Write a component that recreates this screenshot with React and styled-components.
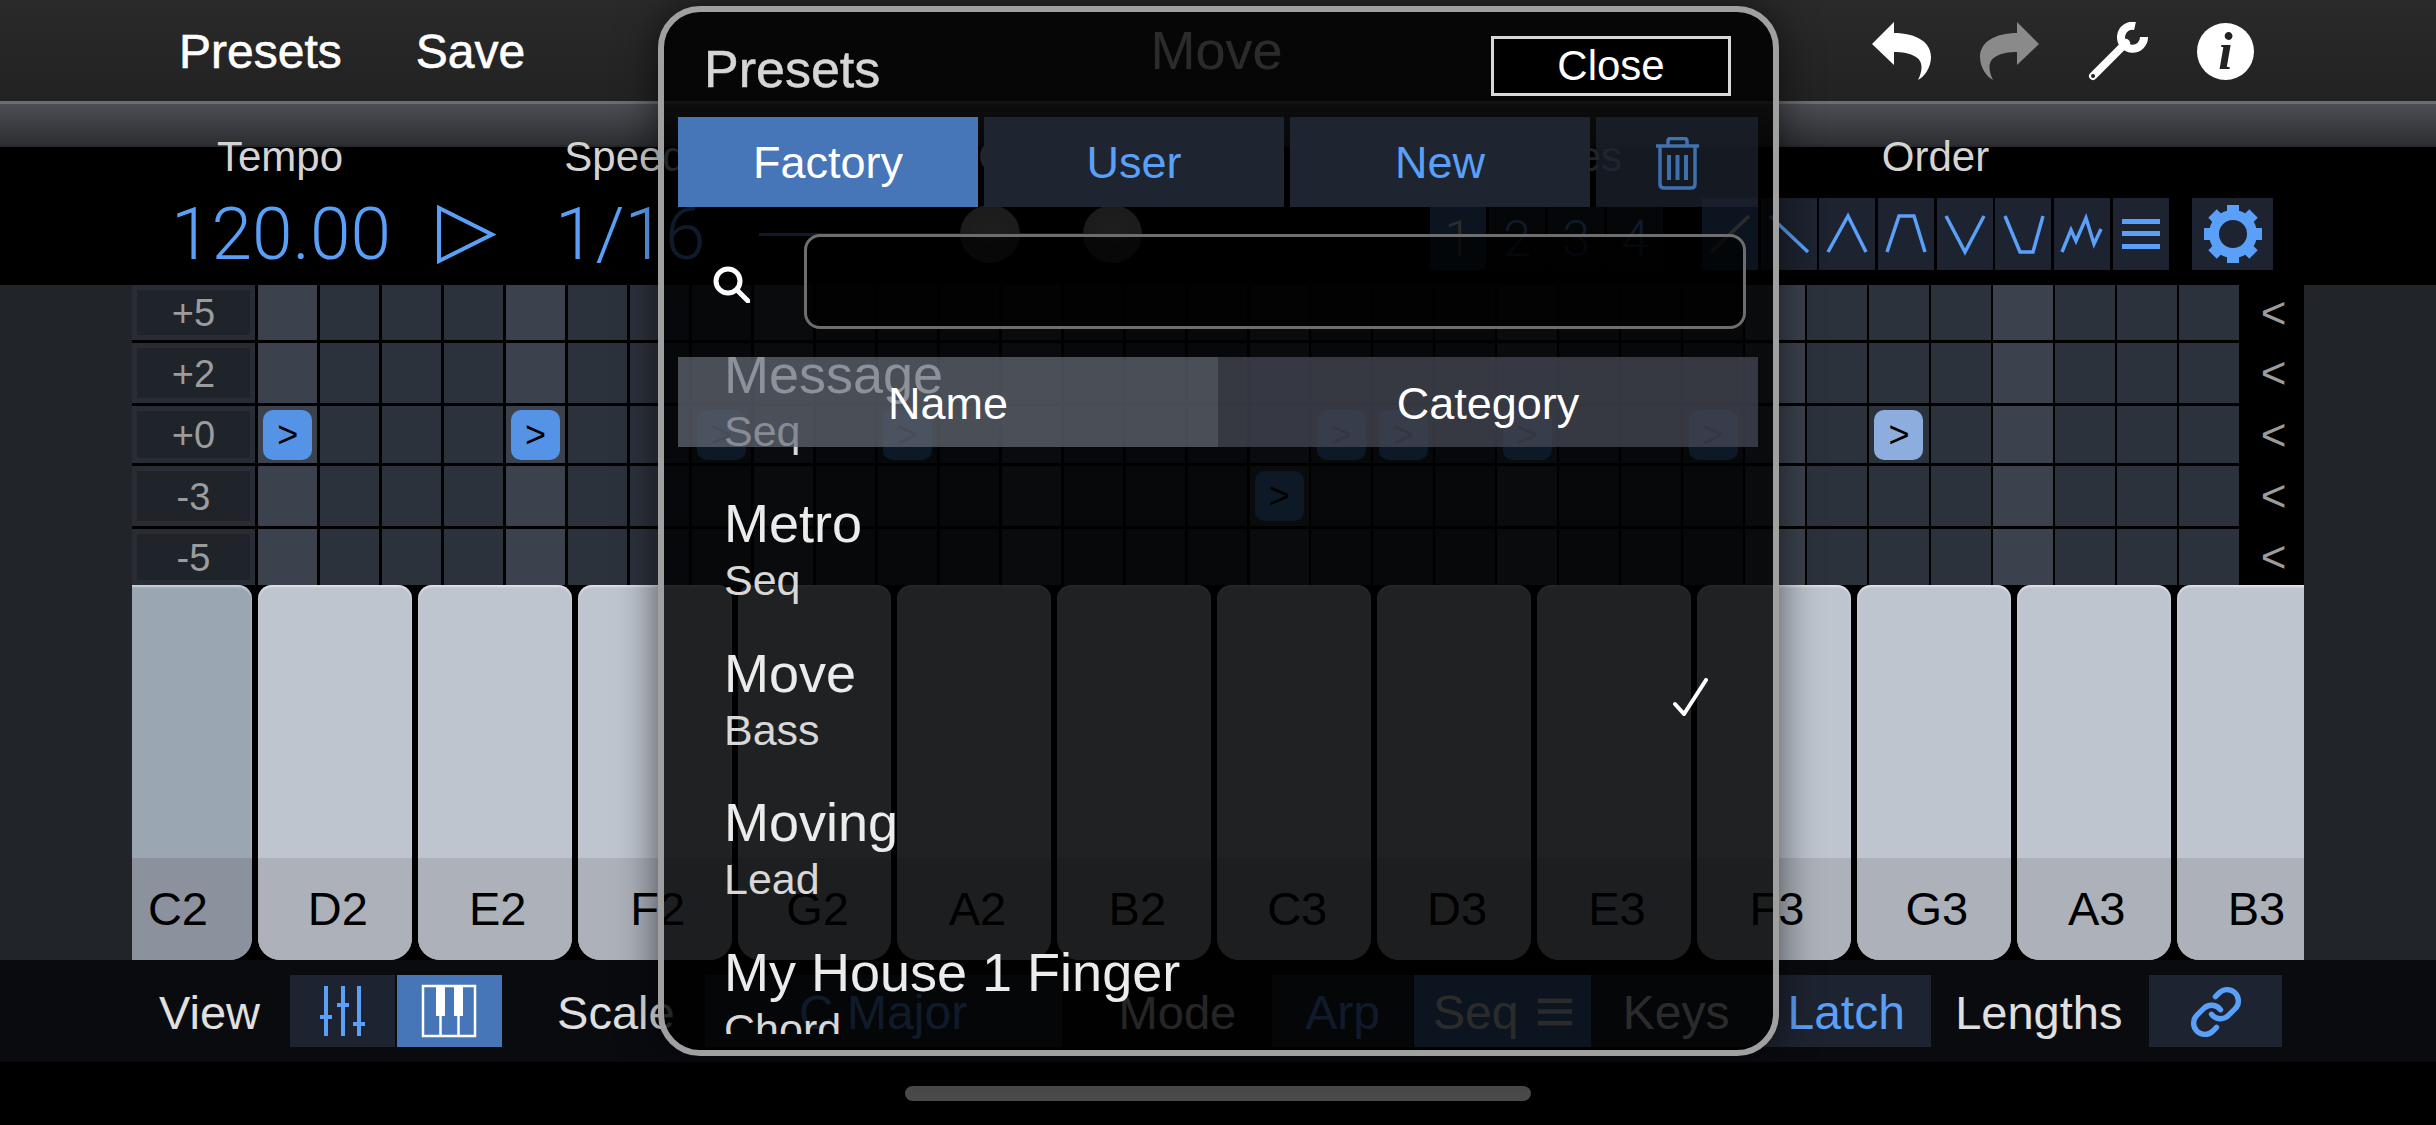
import styled, { createGlobalStyle } from "styled-components";
import { Link } from "lucide-react";

const BLUE = "#5aa0f8";
const ACTIVE = "#4675b8";
const BUTTON = "#1d2330";

const GlobalStyle = createGlobalStyle`
  html, body {
    margin: 0;
    background: #000;
    font-family: "Liberation Sans", Arial, sans-serif;
  }
`;

const Page = styled.div`
  position: relative;
  width: 2436px;
  height: 1125px;
  overflow: hidden;
  background: #000;
  display: flex;
  flex-direction: column;
`;

const TopBar = styled.header`
  height: 101px;
  display: grid;
  grid-template-columns: 1fr auto 1fr;
  align-items: center;
  padding: 2px 182px 0 179px;
  box-sizing: border-box;
  background: linear-gradient(#2a2a2a, #222);
`;

const TopLeft = styled.div`
  display: flex;
  gap: 74px;
`;

const TopAction = styled.span`
  font-size: 48px;
  color: #fff;
  -webkit-text-stroke: 0.6px #fff;
`;

const SongName = styled.span`
  margin-top: -3px;
  font-size: 54px;
  color: #fff;
`;

const TopIcons = styled.div`
  display: flex;
  justify-content: flex-end;
  align-items: center;
  gap: 49px;
`;

const InfoBadge = styled.span`
  width: 57px;
  height: 57px;
  border-radius: 50%;
  background: #fff;
  color: #222;
  display: flex;
  align-items: center;
  justify-content: center;
  font: italic bold 52px "Liberation Serif", serif;
`;

const Band = styled.div`
  height: 46px;
  box-sizing: border-box;
  border-top: 3px solid #6b6d71;
  border-bottom: 2px solid #26282b;
  background: linear-gradient(#4c4e54, #2c2e32);
`;

const Controls = styled.section`
  height: 138px;
  padding-left: 171px;
  display: grid;
  grid-template-columns: 384px 204px 671px 272px 490px 81px;
  background: #000;
`;

const Group = styled.div`
  display: flex;
  flex-direction: column;
`;

const GroupLabel = styled.div`
  width: ${(p) => p.$w || "auto"};
  height: 22px;
  line-height: 20px;
  margin-bottom: 29px;
  padding-left: ${(p) => p.$pl || 0};
  font-size: 42px;
  color: #d4d4d4;
  text-align: ${(p) => (p.$left ? "left" : "center")};
  white-space: nowrap;
`;

const GroupRow = styled.div`
  height: 72px;
  display: flex;
  align-items: ${(p) => p.$align || "center"};
  gap: ${(p) => p.$gap || "0"};
`;

const BigValue = styled.span`
  font: 300 73px Roboto, "Liberation Sans", sans-serif;
  color: ${BLUE};
  white-space: nowrap;
`;

const SliderTrack = styled.div`
  position: relative;
  width: 383px;
  height: 58px;
  padding-left: 201px;
  box-sizing: border-box;
  display: flex;
  gap: 63px;
  &::before {
    content: "";
    position: absolute;
    left: 0;
    right: 0;
    top: 28px;
    height: 3px;
    background: ${BLUE};
  }
`;

const Knob = styled.span`
  position: relative;
  width: 60px;
  height: 58px;
  border-radius: 50%;
  background: radial-gradient(#b5b5b5, #9a9a9a);
`;

const SquareButton = styled.div`
  width: ${(p) => p.$w || "56px"};
  height: ${(p) => p.$h || "72px"};
  display: flex;
  align-items: center;
  justify-content: center;
  background: ${(p) => (p.$on ? ACTIVE : BUTTON)};
  color: ${(p) => (p.$on ? "#fff" : BLUE)};
  font: 300 50px Roboto, "Liberation Sans", sans-serif;
`;

const Main = styled.main`
  height: 675px;
  display: grid;
  grid-template-columns: 132px 2172px 1fr;
  background: #212429;
`;

const Center = styled.div`
  display: flex;
  flex-direction: column;
  overflow: hidden;
  background: #000;
`;

const SeqGrid = styled.div`
  height: 300px;
  display: grid;
  grid-template-rows: 55px 60px 57px 60px 56px;
  row-gap: 3px;
`;

const SeqRow = styled.div`
  display: grid;
  grid-template-columns: 126px 1983px 63px;
`;

const StepLabel = styled.div`
  margin-right: 3px;
  padding-top: 2px;
  box-sizing: border-box;
  border: 5px solid #272c35;
  background: #1f232a;
  color: #9c9c9c;
  font-size: 38px;
  display: flex;
  align-items: center;
  justify-content: center;
`;

const Cells = styled.div`
  display: grid;
  grid-template-columns: repeat(32, 1fr);
`;

const Cell = styled.div`
  margin-right: 2.5px;
  display: flex;
  align-items: center;
  justify-content: center;
  background: ${(p) => (p.$beat ? "#3b424d" : "#2c323c")};
`;

const Note = styled.span`
  width: 49px;
  height: 50px;
  border-radius: 10px;
  display: flex;
  align-items: center;
  justify-content: center;
  background: ${(p) => (p.$soft ? "#8daddf" : "#5593e6")};
  color: #000;
  font-size: 36px;
`;

const Chevron = styled.div`
  padding-left: 2px;
  display: flex;
  align-items: center;
  justify-content: center;
  color: #9c9c9c;
  font-size: 44px;
`;

const Keyboard = styled.div`
  height: 375px;
  overflow: hidden;
  display: flex;
  gap: 6px;
  background: #000;
`;

const Key = styled.div`
  flex: 0 0 153.9px;
  margin-left: ${(p) => p.$ml || 0};
  border-radius: 14px 14px 22px 22px;
  overflow: hidden;
  display: flex;
  flex-direction: column;
  background: ${(p) => (p.$held ? "#9aa6b1" : "#bec5ce")};
  box-shadow: inset 0 2px 2px rgba(255, 255, 255, 0.5);
`;

const KeyLabel = styled.div`
  margin-top: auto;
  height: 102px;
  padding: 0 0 2px 6px;
  box-sizing: border-box;
  display: flex;
  align-items: center;
  justify-content: center;
  background: ${(p) => (p.$held ? "#8b929d" : "#acb1ba")};
  color: #000;
  font-size: 47px;
`;

const BottomBar = styled.footer`
  height: 102px;
  padding: 0 0 0 159px;
  display: flex;
  align-items: center;
  background: #090b0f;
`;

const BarLabel = styled.span`
  margin: 2px 0 0 ${(p) => p.$ml || 0};
  font-size: 47px;
  color: #e0e0e0;
`;

const BarButton = styled.div`
  width: ${(p) => p.$w};
  height: 72px;
  margin-left: ${(p) => p.$ml || 0};
  padding-top: 2px;
  box-sizing: border-box;
  display: flex;
  align-items: center;
  justify-content: center;
  gap: 20px;
  font-size: 48px;
  background: ${(p) => (p.$on ? ACTIVE : BUTTON)};
  color: ${(p) => (p.$on || p.$white ? "#fff" : BLUE)};
`;

const HomeRow = styled.div`
  flex: 1;
  display: flex;
  justify-content: center;
  padding-top: 24px;
`;

const HomeIndicator = styled.div`
  width: 626px;
  height: 15px;
  border-radius: 8px;
  background: #4a4a4a;
`;

/* the presets sheet floats over the whole page */
const Modal = styled.div`
  position: absolute;
  left: 658px;
  top: 6px;
  width: 1121px;
  height: 1050px;
  box-sizing: border-box;
  border: 6px solid #a0a0a0;
  border-radius: 42px;
  background: rgba(0, 0, 0, 0.83);
  box-shadow: 0 0 40px rgba(0, 0, 0, 0.6);
  display: flex;
  flex-direction: column;
  overflow: hidden;
`;

const ModalHead = styled.div`
  height: 105px;
  box-sizing: border-box;
  padding: 24px 42px 0 40px;
  display: flex;
  justify-content: space-between;
  align-items: flex-start;
`;

const ModalTitle = styled.span`
  margin-top: 3px;
  font-size: 52px;
  line-height: 60px;
  color: #d6d6d6;
  -webkit-text-stroke: 0.5px #d6d6d6;
`;

const CloseButton = styled.div`
  width: 240px;
  height: 60px;
  box-sizing: border-box;
  border: 3px solid #d8d8d8;
  background: #000;
  color: #fff;
  font-size: 42px;
  display: flex;
  align-items: center;
  justify-content: center;
`;

const Tabs = styled.div`
  margin: 0 15px 0 14px;
  display: grid;
  grid-template-columns: 300px 300px 300px 162px;
  column-gap: 6px;
  height: 90px;
`;

const Tab = styled.div`
  padding-top: 2px;
  display: flex;
  align-items: center;
  justify-content: center;
  font-size: 45px;
  background: ${(p) => (p.$on ? ACTIVE : "#1e2531")};
  color: ${(p) => (p.$on ? "#fff" : BLUE)};
  opacity: ${(p) => (p.$off ? 0.7 : 1)};
`;

const SearchRow = styled.div`
  margin-top: 27px;
  height: 95px;
  padding: 0 27px 0 49px;
  display: flex;
  justify-content: space-between;
  align-items: center;
`;

const SearchInput = styled.div`
  width: 942px;
  height: 95px;
  box-sizing: border-box;
  border: 3px solid #6e6e6e;
  border-radius: 16px;
  background: rgba(0, 0, 0, 0.7);
`;

const ListArea = styled.div`
  position: relative;
  margin: 28px 15px 0 14px;
  height: 677px;
  overflow: hidden;
`;

const ColumnHead = styled.div`
  position: absolute;
  inset: 0 0 auto 0;
  height: 90px;
  display: grid;
  grid-template-columns: 540px 540px;
`;

const ColumnTitle = styled.div`
  padding-top: 3px;
  display: flex;
  align-items: center;
  justify-content: center;
  font-size: 45px;
  color: #fff;
  background: ${(p) => (p.$on ? "rgba(101, 107, 120, 0.71)" : "rgba(73, 76, 90, 0.71)")};
`;

const PresetList = styled.div`
  margin-top: -28px;
  display: flex;
  flex-direction: column;
`;

const PresetRow = styled.div`
  flex: 0 0 149.5px;
  padding: 0 50px 0 46px;
  display: flex;
  align-items: center;
  justify-content: space-between;
`;

const PresetText = styled.div`
  display: flex;
  flex-direction: column;
  padding-bottom: 8px;
`;

const PresetName = styled.span`
  font-size: 54px;
  line-height: 60px;
  color: #ececec;
`;

const PresetCategory = styled.span`
  margin-top: 2px;
  font-size: 43px;
  line-height: 50px;
  color: #d8d8d8;
`;

const CheckSlot = styled.span`
  margin-top: -8px;
`;

const steps = ["+5", "+2", "+0", "-3", "-5"];
const noteColumns = {
  "+0": [0, 4, 7, 10, 17, 18, 20, 23, 26],
  "-3": [16],
};
const keys = ["C2", "D2", "E2", "F2", "G2", "A2", "B2", "C3", "D3", "E3", "F3", "G3", "A3", "B3"];
const presets = [
  ["Message", "Seq"],
  ["Metro", "Seq"],
  ["Move", "Bass", true],
  ["Moving", "Lead"],
  ["My House 1 Finger", "Chord"],
];
const orderShapes = [
  "9,54 47,18",
  "9,18 47,54",
  "9,54 29,18 47,54",
  "9,54 21,18 36,18 47,54",
  "9,18 28,54 47,18",
  "10,18 25,54 38,54 48,18",
  "8,54 17,32 22,43 32,20 40,46 47,31",
];

function Undo({ color = "#fff", flip }) {
  return (
    <svg width="59" height="59" viewBox="0 0 59 59" style={flip ? { transform: "scaleX(-1)" } : undefined}>
      <path
        fill={color}
        d="M0 22 22 0V11C44 11 59 20 59 35 59 46 52 55 46 58 50 50 52 40 44 35 38 31 30 30 22 30V43Z"
      />
    </svg>
  );
}

function Wrench() {
  return (
    <svg width="60" height="59" viewBox="0 0 60 59" fill="none" stroke="#fff">
      <path d="M5 54 38 21" strokeWidth="8" strokeLinecap="round" />
      <path d="M47 4A11.5 11.5 0 1 0 56 15" strokeWidth="8" />
      <circle cx="5" cy="54" r="2" fill="#222" stroke="none" />
    </svg>
  );
}

function Triangle() {
  return (
    <svg width="59" height="59" viewBox="0 0 59 59">
      <path d="M2 3V56L55 29.5Z" fill="none" stroke={BLUE} strokeWidth="4" />
    </svg>
  );
}

function OrderIcon({ points, color = BLUE }) {
  return (
    <svg width="56" height="72" viewBox="0 0 56 72" fill="none" stroke={color} strokeWidth="3.5">
      <polyline points={points} />
    </svg>
  );
}

function ListLines({ width = 38, height = 30, color = BLUE }) {
  return (
    <svg width={width} height={height} viewBox="0 0 38 30" fill={color}>
      <rect y="0" width="38" height="5" />
      <rect y="12" width="38" height="5" />
      <rect y="25" width="38" height="5" />
    </svg>
  );
}

function Gear() {
  return (
    <svg width="58" height="58" viewBox="0 0 58 58">
      {[0, 45, 90, 135, 180, 225, 270, 315].map((a) => (
        <rect key={a} x="23" y="0" width="12" height="14" fill={BLUE} transform={`rotate(${a} 29 29)`} />
      ))}
      <circle cx="29" cy="29" r="19" fill="none" stroke={BLUE} strokeWidth="10" />
    </svg>
  );
}

function MixerIcon() {
  return (
    <svg width="105" height="72" viewBox="0 0 105 72" fill={BLUE}>
      <rect x="34" y="10" width="4" height="50" />
      <rect x="30" y="39" width="12" height="4" />
      <rect x="51" y="10" width="4" height="50" />
      <rect x="47" y="27" width="12" height="4" />
      <rect x="67" y="10" width="4" height="50" />
      <rect x="63" y="46" width="12" height="4" />
    </svg>
  );
}

function PianoIcon() {
  return (
    <svg width="105" height="72" viewBox="0 0 105 72" fill="#fff" stroke="#fff">
      <rect x="26" y="10" width="52" height="50" fill="none" strokeWidth="2.5" />
      <rect x="39" y="10" width="9" height="30" strokeWidth="0" />
      <rect x="57" y="10" width="9" height="30" strokeWidth="0" />
      <path d="M43.5 40V60M61.5 40V60" strokeWidth="2.5" />
    </svg>
  );
}

function SearchIcon() {
  return (
    <svg width="37" height="37" viewBox="0 0 37 37" fill="none" stroke="#fff" strokeWidth="5" style={{ marginTop: 6 }}>
      <circle cx="15" cy="15" r="12" />
      <path d="M24 24 35 35" strokeLinecap="round" />
    </svg>
  );
}

function TrashIcon() {
  return (
    <svg width="43" height="53" viewBox="0 0 43 53" fill="none" stroke={BLUE} strokeWidth="3.5">
      <path d="M0 9H43" />
      <path d="M12 9V4Q12 1.5 15 1.5H28Q31 1.5 31 4V9" />
      <path d="M4 9V47Q4 51 8 51H35Q39 51 39 47V9" />
      <path d="M13 18V43M21.5 18V43M30 18V43" strokeWidth="4" />
    </svg>
  );
}

function CheckIcon() {
  return (
    <svg width="35" height="38" viewBox="0 0 35 38" fill="none" stroke="#fff" strokeWidth="4" strokeLinecap="round">
      <path d="M2 26 11 36 33 2" />
    </svg>
  );
}

export default function App() {
  return (
    <Page>
      <GlobalStyle />
      <TopBar>
        <TopLeft>
          <TopAction>Presets</TopAction>
          <TopAction>Save</TopAction>
        </TopLeft>
        <SongName>Move</SongName>
        <TopIcons>
          <Undo />
          <Undo color="#8a8a8a" flip />
          <Wrench />
          <InfoBadge>i</InfoBadge>
        </TopIcons>
      </TopBar>
      <Band />
      <Controls>
        <Group>
          <GroupLabel $w="218px">Tempo</GroupLabel>
          <GroupRow $gap="46px">
            <BigValue>120.00</BigValue>
            <Triangle />
          </GroupRow>
        </Group>
        <Group>
          <GroupLabel $w="140px">Speed</GroupLabel>
          <GroupRow>
            <BigValue>1/16</BigValue>
          </GroupRow>
        </Group>
        <Group>
          <GroupLabel $left $pl="219px">Gate</GroupLabel>
          <GroupRow>
            <SliderTrack>
              <Knob />
              <Knob />
            </SliderTrack>
          </GroupRow>
        </Group>
        <Group>
          <GroupLabel $w="230px">Octaves</GroupLabel>
          <GroupRow $align="flex-end" $gap="3px">
            <SquareButton $on $h="63px">1</SquareButton>
            <SquareButton $h="63px">2</SquareButton>
            <SquareButton $h="63px">3</SquareButton>
            <SquareButton $h="63px">4</SquareButton>
          </GroupRow>
        </Group>
        <Group>
          <GroupLabel $w="467px">Order</GroupLabel>
          <GroupRow $gap="2.7px">
            {orderShapes.map((points, i) => (
              <SquareButton key={points} $on={i === 0}>
                <OrderIcon points={points} color={i === 0 ? "#fff" : BLUE} />
              </SquareButton>
            ))}
            <SquareButton>
              <ListLines width={38} height={30} />
            </SquareButton>
          </GroupRow>
        </Group>
        <Group>
          <GroupLabel />
          <GroupRow>
            <SquareButton $w="81px">
              <Gear />
            </SquareButton>
          </GroupRow>
        </Group>
      </Controls>
      <Main>
        <div />
        <Center>
          <SeqGrid>
            {steps.map((step) => (
              <SeqRow key={step}>
                <StepLabel>{step}</StepLabel>
                <Cells>
                  {Array.from({ length: 32 }, (_, col) => (
                    <Cell key={col} $beat={col % 4 === 0}>
                      {noteColumns[step]?.includes(col) && <Note $soft={col === 26}>&gt;</Note>}
                    </Cell>
                  ))}
                </Cells>
                <Chevron>&lt;</Chevron>
              </SeqRow>
            ))}
          </SeqGrid>
          <Keyboard>
            {keys.map((key, i) => (
              <Key key={key} $held={i === 0} $ml={i === 0 ? "-34px" : 0}>
                <KeyLabel $held={i === 0}>{key}</KeyLabel>
              </Key>
            ))}
          </Keyboard>
        </Center>
        <div />
      </Main>
      <BottomBar>
        <BarLabel>View</BarLabel>
        <BarButton $w="105px" $ml="30px">
          <MixerIcon />
        </BarButton>
        <BarButton $w="105px" $ml="2px" $on>
          <PianoIcon />
        </BarButton>
        <BarLabel $ml="55px">Scale</BarLabel>
        <BarButton $w="357px" $ml="30px">C Major</BarButton>
        <BarLabel $ml="57px">Mode</BarLabel>
        <BarButton $w="141px" $ml="36px">Arp</BarButton>
        <BarButton $w="177px" $ml="1px" $on>
          Seq
          <ListLines width={34} height={32} color="#fff" />
        </BarButton>
        <BarButton $w="170px" $white>Keys</BarButton>
        <BarButton $w="170px">Latch</BarButton>
        <BarLabel $ml="24px">Lengths</BarLabel>
        <BarButton $w="133px" $ml="27px">
          <Link size={54} strokeWidth={2.4} color={BLUE} />
        </BarButton>
      </BottomBar>
      <HomeRow>
        <HomeIndicator />
      </HomeRow>

      <Modal>
        <ModalHead>
          <ModalTitle>Presets</ModalTitle>
          <CloseButton>Close</CloseButton>
        </ModalHead>
        <Tabs>
          <Tab $on>Factory</Tab>
          <Tab>User</Tab>
          <Tab>New</Tab>
          <Tab $off>
            <TrashIcon />
          </Tab>
        </Tabs>
        <SearchRow>
          <SearchIcon />
          <SearchInput />
        </SearchRow>
        <ListArea>
          <PresetList>
            {presets.map(([name, category, checked]) => (
              <PresetRow key={name}>
                <PresetText>
                  <PresetName>{name}</PresetName>
                  <PresetCategory>{category}</PresetCategory>
                </PresetText>
                {checked && (
                  <CheckSlot>
                    <CheckIcon />
                  </CheckSlot>
                )}
              </PresetRow>
            ))}
          </PresetList>
          <ColumnHead>
            <ColumnTitle $on>Name</ColumnTitle>
            <ColumnTitle>Category</ColumnTitle>
          </ColumnHead>
        </ListArea>
      </Modal>
    </Page>
  );
}
